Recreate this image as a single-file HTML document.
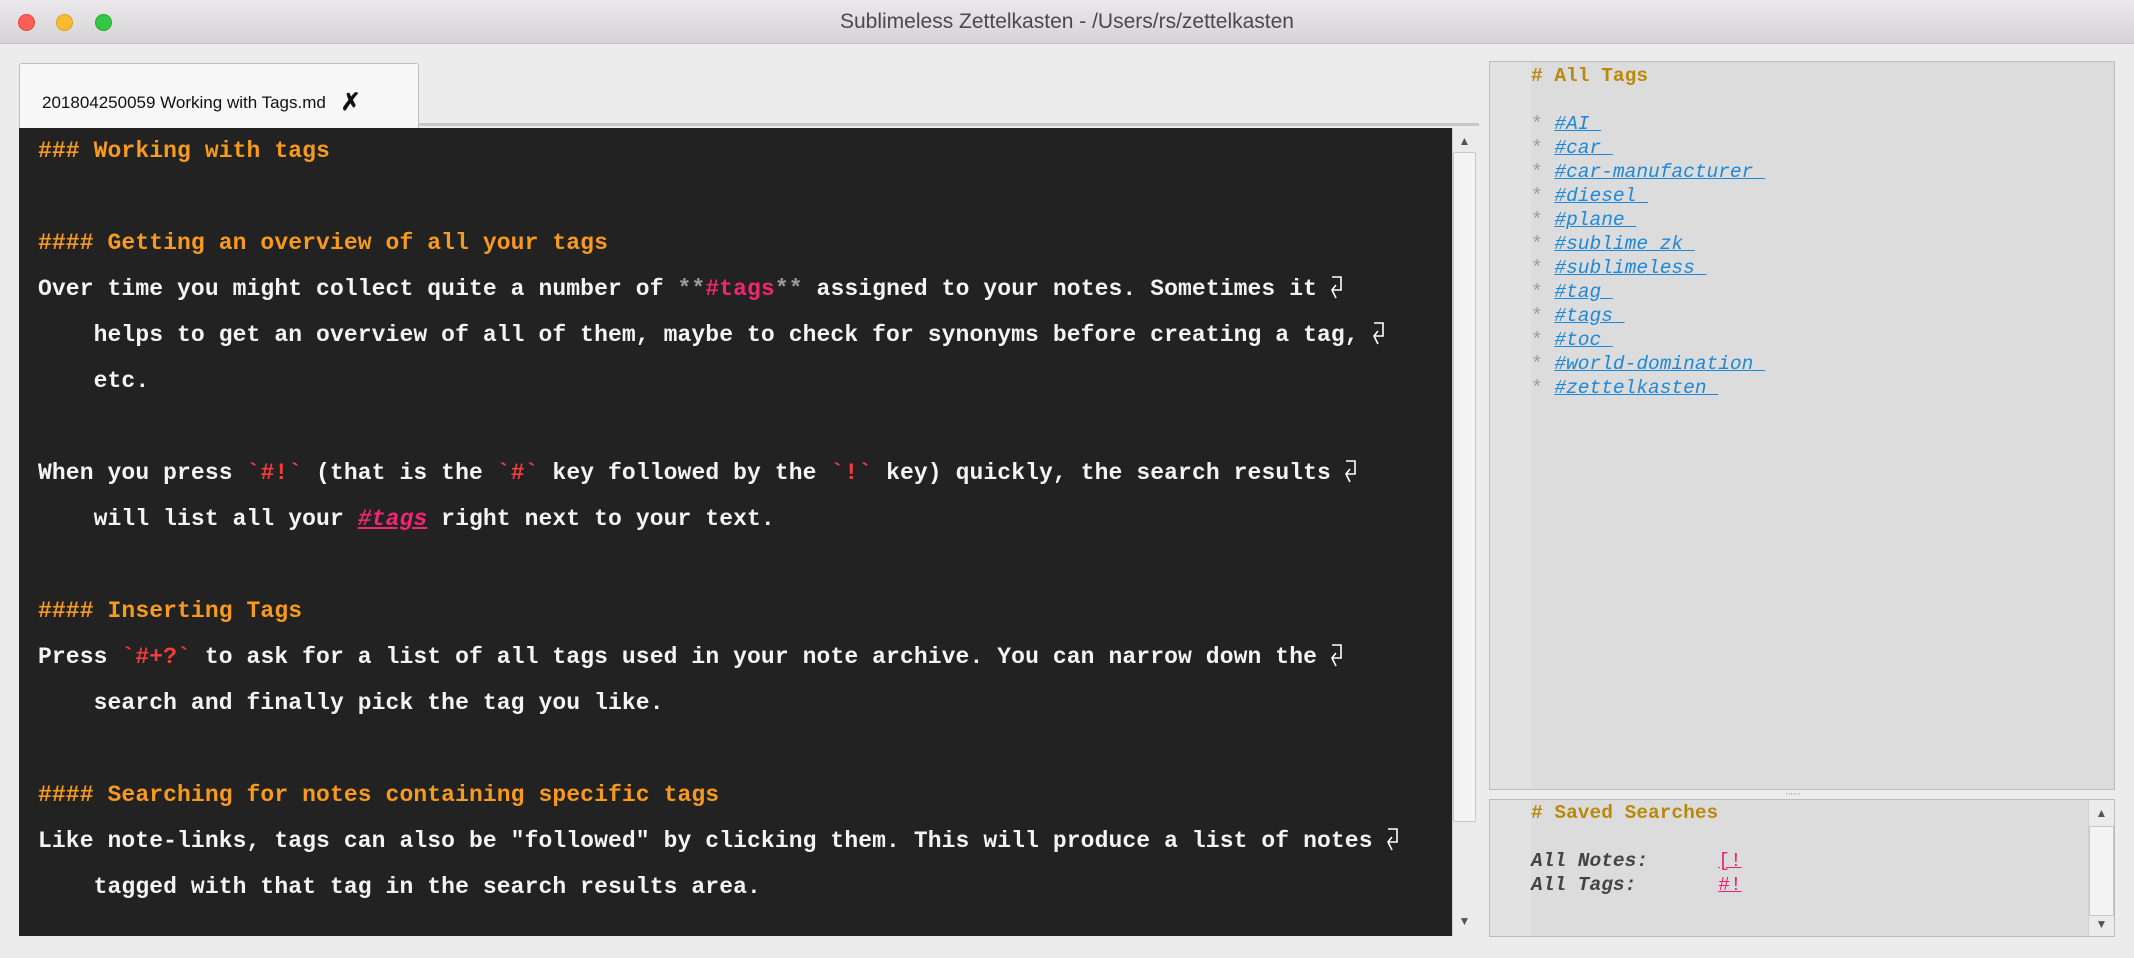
<!DOCTYPE html>
<html><head><meta charset="utf-8"><style>
*{margin:0;padding:0;box-sizing:border-box}
body{width:2134px;height:958px;background:#ececec;position:relative;overflow:hidden;font-family:"Liberation Sans",sans-serif}
.title{position:absolute;left:0;top:0;width:2134px;height:44px;background:linear-gradient(#ebe9eb,#d5d3d5);border-bottom:1px solid #c4c4c4;text-align:center;font-size:21px;line-height:44px;color:#4a4a4a}
.dot{position:absolute;top:14px;width:17px;height:17px;border-radius:50%}
.tab{position:absolute;left:19px;top:63px;width:400px;height:65px;background:#f7f7f7;border:1px solid #bdbdbd;border-bottom:none;border-radius:3px 3px 0 0;font-size:17px;color:#111;padding:22px 0 0 22px}
.tabline{position:absolute;left:418px;top:123px;width:1061px;height:3px;background:#c8c8c8}
.ed{position:absolute;left:19px;top:128px;width:1433px;height:808px;background:#222;font-family:"Liberation Mono",monospace;font-size:23px;line-height:46px;color:#f4f4f4;padding-left:19px;white-space:pre;font-weight:bold;letter-spacing:0.1px}
.h{color:#f79a1e}.p{color:#f0266f}.g{color:#999}.r{color:#f53b3b}.ln{color:#f0266f;text-decoration:underline;font-style:italic}
.w{display:inline-block;width:14px;height:26px;vertical-align:-6px;margin-left:12px}
.sb{position:absolute;left:1452px;top:128px;width:25px;height:808px;background:#ebebeb;border-left:1px solid #d0d0d0}
.th{position:absolute;left:1453px;top:152px;width:23px;height:670px;background:#f4f4f4;border:1px solid #c8c8c8;border-radius:2px}
.arr{position:absolute;font-size:12px;color:#555;width:25px;text-align:center}
.rp{position:absolute;left:1489px;top:61px;width:626px;height:729px;background:#dcdcdc;border:1px solid #bcbcbc}
.rp2{position:absolute;left:1489px;top:799px;width:626px;height:138px;background:#dcdcdc;border:1px solid #bcbcbc;overflow:hidden}
.gut{position:absolute;left:0;top:0;width:41px;height:100%;background:#e2e2e2}
.mono{position:absolute;font-family:"Liberation Mono",monospace;font-size:19.5px;line-height:24px;white-space:pre;font-weight:bold}
.tg{color:#b88a0c}.bl{color:#1e88d8;text-decoration:underline;font-style:italic;font-weight:normal}
.st{color:#999;font-weight:normal}
.it{font-style:italic;color:#444}
</style></head><body>
<div class="title">Sublimeless Zettelkasten - /Users/rs/zettelkasten</div>
<div class="dot" style="left:18px;background:#fc5f57;border:1px solid #de4a42"></div>
<div class="dot" style="left:56px;background:#fdbc2e;border:1px solid #dea123"></div>
<div class="dot" style="left:95px;background:#33c748;border:1px solid #27aa35"></div>
<div class="tabline"></div>
<div class="tab">201804250059 Working with Tags.md <span style="font-size:24px;font-weight:bold;margin-left:10px;position:relative;top:2px">✗</span></div>
<div class="ed"><span class="h">### Working with tags</span>

<span class="h">#### Getting an overview of all your tags</span>
Over time you might collect quite a number of <span class="g">**</span><span class="p">#tags</span><span class="g">**</span> assigned to your notes. Sometimes it<svg class="w" viewBox="0 0 14 26"><path d="M3 2H12V15H4M7 10L3 15L7 23" stroke="#fff" stroke-width="1.6" fill="none"/></svg>
    helps to get an overview of all of them, maybe to check for synonyms before creating a tag,<svg class="w" viewBox="0 0 14 26"><path d="M3 2H12V15H4M7 10L3 15L7 23" stroke="#fff" stroke-width="1.6" fill="none"/></svg>
    etc.

When you press <span class="r">`#!`</span> (that is the <span class="r">`#`</span> key followed by the <span class="r">`!`</span> key) quickly, the search results<svg class="w" viewBox="0 0 14 26"><path d="M3 2H12V15H4M7 10L3 15L7 23" stroke="#fff" stroke-width="1.6" fill="none"/></svg>
    will list all your <span class="ln">#tags</span> right next to your text.

<span class="h">#### Inserting Tags</span>
Press <span class="r">`#+?`</span> to ask for a list of all tags used in your note archive. You can narrow down the<svg class="w" viewBox="0 0 14 26"><path d="M3 2H12V15H4M7 10L3 15L7 23" stroke="#fff" stroke-width="1.6" fill="none"/></svg>
    search and finally pick the tag you like.

<span class="h">#### Searching for notes containing specific tags</span>
Like note-links, tags can also be "followed" by clicking them. This will produce a list of notes<svg class="w" viewBox="0 0 14 26"><path d="M3 2H12V15H4M7 10L3 15L7 23" stroke="#fff" stroke-width="1.6" fill="none"/></svg>
    tagged with that tag in the search results area.</div>
<div class="sb"></div>
<div class="th"></div>
<div class="arr" style="left:1452px;top:134px">▲</div>
<div class="arr" style="left:1452px;top:914px">▼</div>
<div class="rp"><div class="gut"></div>
<div class="mono" style="left:41px;top:2px"><span class="tg"># All Tags</span>

<span class="st">*</span> <span class="bl">#AI </span>
<span class="st">*</span> <span class="bl">#car </span>
<span class="st">*</span> <span class="bl">#car-manufacturer </span>
<span class="st">*</span> <span class="bl">#diesel </span>
<span class="st">*</span> <span class="bl">#plane </span>
<span class="st">*</span> <span class="bl">#sublime_zk </span>
<span class="st">*</span> <span class="bl">#sublimeless </span>
<span class="st">*</span> <span class="bl">#tag </span>
<span class="st">*</span> <span class="bl">#tags </span>
<span class="st">*</span> <span class="bl">#toc </span>
<span class="st">*</span> <span class="bl">#world-domination </span>
<span class="st">*</span> <span class="bl">#zettelkasten </span></div></div>
<div style="position:absolute;left:1786px;top:792px;font-size:8px;color:#999;letter-spacing:1px">''''''</div>
<div class="rp2"><div class="gut"></div>
<div class="mono" style="left:41px;top:1px"><span class="tg"># Saved Searches</span>

<span class="it">All Notes:</span>      <span style="color:#e8246f;text-decoration:underline;font-weight:normal">[!</span>
<span class="it">All Tags:</span>       <span style="color:#e8246f;text-decoration:underline;font-weight:normal">#!</span></div>
<div style="position:absolute;left:598px;top:0;width:27px;height:138px;background:#ebebeb;border-left:1px solid #d0d0d0"></div>
<div style="position:absolute;left:599px;top:26px;width:25px;height:90px;background:#f4f4f4;border:1px solid #c8c8c8"></div>
<div class="arr" style="left:599px;top:6px">▲</div>
<div class="arr" style="left:599px;top:117px">▼</div>
</div>
</body></html>
